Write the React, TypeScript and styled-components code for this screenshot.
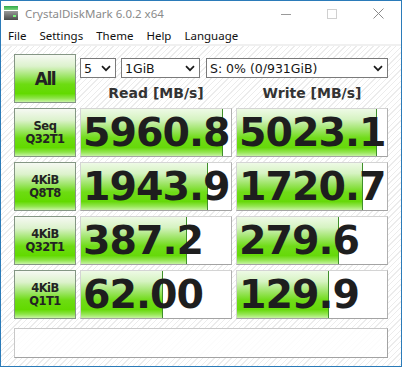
import React from 'react';
import styled, { createGlobalStyle } from 'styled-components';

const GlobalStyle = createGlobalStyle`
  html, body { margin: 0; padding: 0; background: #fff; }
  body { width: 402px; height: 367px; overflow: hidden; }
`;

const Window = styled.div`
  width: 402px;
  height: 367px;
  box-sizing: border-box;
  border: 1px solid #2b7bb9;
  display: flex;
  flex-direction: column;
  background: #fff;
  font-family: "Noto Sans", "DejaVu Sans", sans-serif;
`;

const TitleBar = styled.div`
  height: 25px;
  display: flex;
  align-items: center;
  padding-left: 3px;
`;

const AppIcon = styled.svg`
  width: 14px;
  height: 15px;
  flex: none;
`;

const Title = styled.span`
  margin-left: 7px;
  font-size: 11.5px;
  color: #8a8a8a;
  white-space: nowrap;
`;

const Controls = styled.div`
  margin-left: auto;
  display: flex;
  height: 100%;
`;

const CtrlButton = styled.div`
  width: 46px;
  display: flex;
  align-items: center;
  justify-content: center;
`;

const MenuBar = styled.div`
  height: 18px;
  display: flex;
  align-items: center;
  gap: 13px;
  padding-left: 7px;
  font-size: 11.5px;
  color: #111;
`;

const MenuItem = styled.span`
  white-space: nowrap;
`;

const Client = styled.div`
  flex: 1;
  border-top: 2px solid #f0f0f0;
  background: repeating-linear-gradient(135deg, #ffffff 0 3px, #ececec 3px 4px);
  padding: 8px 0 0 13px;
  display: flex;
  flex-direction: column;
`;

const Board = styled.div`
  display: grid;
  grid-template-columns: 62px 152px 152px;
  grid-auto-rows: 49px;
  column-gap: 4px;
  row-gap: 5px;
`;

const greenGradient = `linear-gradient(to bottom, #f6f9f3 0%, #dcf2cc 24%, #9ce565 46%, #6ddc12 62%, #62da00 82%, #8ee54a 92%, #c9f4a6 100%)`;

const TestButton = styled.div<{ $big?: boolean }>`
  box-sizing: border-box;
  border: 1px solid #849684;
  background: ${greenGradient};
  display: flex;
  flex-direction: column;
  align-items: center;
  justify-content: center;
  font-family: "DejaVu Sans", sans-serif;
  font-weight: bold;
  color: #232323;
  font-size: ${p => (p.$big ? '17px' : '11.5px')};
  letter-spacing: ${p => (p.$big ? '-1.5px' : '-0.5px')};
  line-height: ${p => (p.$big ? '20px' : '13px')};
`;

const HeadCell = styled.div`
  grid-column: span 2;
  display: flex;
  flex-direction: column;
`;

const SelectRow = styled.div`
  margin-top: 4px;
  display: flex;
  gap: 5px;
`;

const Select = styled.div<{ $w: number }>`
  width: ${p => p.$w}px;
  height: 20px;
  box-sizing: border-box;
  border: 1px solid #7a7a7a;
  background: #fff;
  display: flex;
  align-items: center;
  padding: 0 4px 0 3px;
  font-family: "DejaVu Sans", sans-serif;
  font-size: 12.5px;
  color: #151515;
  &:last-child { margin-left: 1px; }
`;

const Chevron = styled.svg`
  margin-left: auto;
  width: 10px;
  height: 7px;
  flex: none;
`;

const Headers = styled.div`
  display: grid;
  grid-template-columns: 152px 152px;
  column-gap: 4px;
  padding-top: 6px;
`;

const Header = styled.div`
  text-align: center;
  font-family: "DejaVu Sans", sans-serif;
  font-weight: bold;
  font-size: 14px;
  line-height: 18px;
  color: #333;
`;

const ValueBox = styled.div`
  box-sizing: border-box;
  border: 1px solid;
  border-color: #d4d4d4 #b0b0b0 #a4a4a4 #d4d4d4;
  background: #fff;
  display: grid;
  grid-template-columns: minmax(0, 1fr);
`;

const Bar = styled.div`
  grid-area: 1 / 1;
  justify-self: start;
  box-sizing: border-box;
  border-right: 1px solid #3f8f2a;
  background: linear-gradient(to bottom, #eefae6 0%, #d6f3c2 22%, #9be462 45%, #70dc18 62%, #66d90a 82%, #94e652 92%, #c6f3a2 100%);
`;

const Value = styled.div`
  grid-area: 1 / 1;
  align-self: center;
  padding-left: 2px;
  font-family: "DejaVu Sans", sans-serif;
  font-weight: bold;
  font-size: 39.5px;
  letter-spacing: -1px;
  line-height: 1;
  color: #1e1e1e;
  white-space: nowrap;
`;

const Comment = styled.div`
  margin-top: 9px;
  width: 374px;
  height: 30px;
  box-sizing: border-box;
  border: 1px solid;
  border-color: #c8c8c8 #a2a2a2 #a2a2a2 #c8c8c8;
  background: rgba(255, 255, 255, 0.85);
`;

const rows = [
  { l1: 'Seq', l2: 'Q32T1', read: '5960.8', write: '5023.1', rw: 142, ww: 140 },
  { l1: '4KiB', l2: 'Q8T8', read: '1943.9', write: '1720.7', rw: 127, ww: 126 },
  { l1: '4KiB', l2: 'Q32T1', read: '387.2', write: '279.6', rw: 106, ww: 102 },
  { l1: '4KiB', l2: 'Q1T1', read: '62.00', write: '129.9', rw: 82, ww: 92 },
];

const Down = () => (
  <Chevron viewBox="0 0 10 7">
    <polyline points="1,1.2 5,5.2 9,1.2" fill="none" stroke="#1a1a1a" strokeWidth="1.7" />
  </Chevron>
);

const Result = ({ value, width }: { value: string; width: number }) => (
  <ValueBox>
    <Bar style={{ width: `${width}px` }} />
    <Value>{value}</Value>
  </ValueBox>
);

export default function App() {
  return (
    <>
      <GlobalStyle />
      <Window>
        <TitleBar>
          <AppIcon viewBox="0 0 14 15">
            <defs>
              <linearGradient id="gtop" x1="0" y1="0" x2="0" y2="1">
                <stop offset="0" stopColor="#2fa84a" />
                <stop offset="1" stopColor="#7bd67b" />
              </linearGradient>
              <linearGradient id="gbody" x1="0" y1="0" x2="0" y2="1">
                <stop offset="0" stopColor="#9a9a9a" />
                <stop offset="1" stopColor="#4a4a4a" />
              </linearGradient>
            </defs>
            <rect x="0" y="0" width="14" height="4" fill="url(#gtop)" />
            <rect x="0" y="5" width="14" height="9" fill="url(#gbody)" />
            <rect x="9" y="9" width="3" height="2" fill="#7cf07c" />
          </AppIcon>
          <Title>CrystalDiskMark 6.0.2 x64</Title>
          <Controls>
            <CtrlButton>
              <svg width="10" height="10" viewBox="0 0 10 10">
                <line x1="0" y1="5.5" x2="10" y2="5.5" stroke="#9a9a9a" strokeWidth="1" />
              </svg>
            </CtrlButton>
            <CtrlButton>
              <svg width="10" height="10" viewBox="0 0 10 10">
                <rect x="0.5" y="0.5" width="9" height="9" fill="none" stroke="#d0d0d0" strokeWidth="1" />
              </svg>
            </CtrlButton>
            <CtrlButton>
              <svg width="11" height="11" viewBox="0 0 11 11">
                <path d="M0.5 0.5 L10.5 10.5 M10.5 0.5 L0.5 10.5" stroke="#8a8a8a" strokeWidth="1" />
              </svg>
            </CtrlButton>
          </Controls>
        </TitleBar>
        <MenuBar>
          <MenuItem>File</MenuItem>
          <MenuItem>Settings</MenuItem>
          <MenuItem>Theme</MenuItem>
          <MenuItem>Help</MenuItem>
          <MenuItem>Language</MenuItem>
        </MenuBar>
        <Client>
          <Board>
            <TestButton $big>All</TestButton>
            <HeadCell>
              <SelectRow>
                <Select $w={36}>5<Down /></Select>
                <Select $w={79}>1GiB<Down /></Select>
                <Select $w={182}>S: 0% (0/931GiB)<Down /></Select>
              </SelectRow>
              <Headers>
                <Header>Read [MB/s]</Header>
                <Header>Write [MB/s]</Header>
              </Headers>
            </HeadCell>
            {rows.map((r, i) => (
              <React.Fragment key={i}>
                <TestButton>
                  <span>{r.l1}</span>
                  <span>{r.l2}</span>
                </TestButton>
                <Result value={r.read} width={r.rw} />
                <Result value={r.write} width={r.ww} />
              </React.Fragment>
            ))}
          </Board>
          <Comment />
        </Client>
      </Window>
    </>
  );
}
